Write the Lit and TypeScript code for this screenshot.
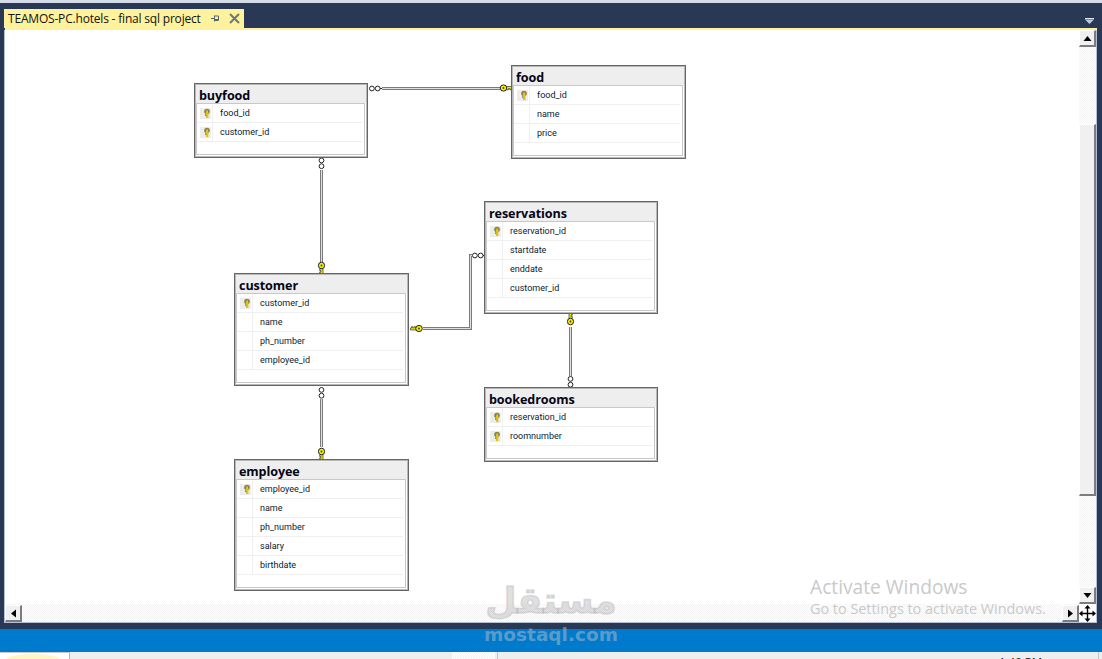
import { LitElement, html, css, svg } from "lit";
import { customElement } from "lit/decorators.js";

type T = { name: string; x: number; y: number; w: number; rows: [string, boolean][] };
const ORIGIN_X = 5, ORIGIN_Y = 30;
const tables: T[] = [
  { name: "buyfood", x: 194, y: 83, w: 174, rows: [["food_id", true], ["customer_id", true]] },
  { name: "food", x: 511, y: 65, w: 175, rows: [["food_id", true], ["name", false], ["price", false]] },
  { name: "reservations", x: 484, y: 201, w: 174, rows: [["reservation_id", true], ["startdate", false], ["enddate", false], ["customer_id", false]] },
  { name: "customer", x: 234, y: 273, w: 175, rows: [["customer_id", true], ["name", false], ["ph_number", false], ["employee_id", false]] },
  { name: "bookedrooms", x: 484, y: 387, w: 174, rows: [["reservation_id", true], ["roomnumber", true]] },
  { name: "employee", x: 234, y: 459, w: 175, rows: [["employee_id", true], ["name", false], ["ph_number", false], ["salary", false], ["birthdate", false]] },
];

const lines = [
  "M382 88.500H500",
  "M321.500 170V262",
  "M423 328.500H470.500V255.500H472",
  "M321.500 399V447",
  "M570.500 327V376",
];

const ring = (x: number, y: number) => svg`<circle cx=${x} cy=${y} r="2.400" fill="#fff" stroke="#222" stroke-width="1"/>`;
const infH = (x: number, y: number) => svg`${ring(x + 2.9, y)}${ring(x + 8.7, y)}<path d="M${x + 11} ${y}h2" stroke="#222"/>`;
const infV = (x: number, y: number) => svg`${ring(x, y + 2.9)}${ring(x, y + 8.7)}`;

/* Relationship key: head at (0,0) pointing along +x with two teeth. */
const key = (x: number, y: number, rot: number) => svg`<g transform="translate(${x} ${y}) rotate(${rot})">
  <path d="M3 -1.500H8.500V.5H7.500V1.800H6.300V.5H5V1.800H3.500V1.200H3Z" fill="#f6f000" stroke="#333" stroke-width=".7"/>
  <ellipse rx="3.300" ry="3.100" fill="#f6f000" stroke="#222" stroke-width="1"/>
  <circle r=".9" fill="#333"/>
</g>`;

@customElement("app-root")
export class AppRoot extends LitElement {
  static styles = css`
    :host { display: block; width: 1102px; height: 659px; position: relative; overflow: hidden; background: #293955; font-family: "Open Sans", "Liberation Sans", sans-serif; }
    .topstrip { height: 3px; background: #d6dbe9; }
    .tabs { height: 25px; display: flex; justify-content: space-between; padding-left: 4px; padding-right: 8px; }
    .tab { margin-top: 6px; width: 240px; height: 19px; box-sizing: border-box; background: #fff29d; display: flex; align-items: center; padding-left: 4px; color: #111; font-size: 12px; white-space: nowrap; font-family: "Open Sans", sans-serif; letter-spacing: -0.19px; }
    .tab .t { width: 203px; }
    .tab svg { display: block; }
    .tab .pin { margin-right: 9px; }
    .drop { margin-top: 15px; }
    .yline { height: 2px; background: #fff29d; margin: 0 5px 0 5px; }
    .doc { margin: 0 5px 0 4px; border-left: 1px solid #b4bfdc; border-right: 1px solid #b4bfdc; border-bottom: 1px solid #b4bfdc; display: grid; grid-template-columns: 1074px 17px; grid-template-rows: 574px 18px; background: #fff; width: 1091px; }
    .canvas { position: relative; overflow: hidden; background: #fff; }
    .wires { position: absolute; left: 0; top: 0; }
    .dither { background: repeating-conic-gradient(#f3f3f3 0 25%, #fff 0 50%) 0 0 / 2px 2px; }
    .vs { display: flex; flex-direction: column; }
    .hs { display: flex; padding-top: 1px; }
    .btn { box-sizing: border-box; width: 17px; height: 17px; background: #f0f0f0; border: 1px solid #fff; border-right: 2px solid #7c7c7c; border-bottom: 2px solid #7c7c7c; display: flex; align-items: center; justify-content: center; flex: none; }
    .hs .track { flex: 1; }
    .vs .track1 { height: 77px; }
    .vs .thumb { box-sizing: border-box; height: 374px; background: #f0f0f0; border: 1px solid #fff; border-right: 2px solid #7c7c7c; border-bottom: 2px solid #7c7c7c; }
    .vs .track2 { height: 91px; }
    .corner { background: #fff; display: flex; align-items: center; justify-content: center; }
    .navy { height: 6px; }
    .blue { height: 23px; background: #007acc; }
    .status { height: 7px; background: #eeeeee; display: flex; overflow: hidden; position: relative; }
    .thumbbox { width: 70px; background: #fff; border-right: 1px solid #b5b5b5; border-top: 1px solid #c8c8c8; box-sizing: border-box; overflow: hidden; }
    .blob { width: 60px; height: 20px; margin-left: 3px; margin-top: 1px; border-radius: 30px 30px 0 0 / 8px 8px 0 0; background: #fff6c8; }
    .sp { width: 382px; }
    .mid { width: 43px; }
    .vline { width: 1px; background: #c4c4c4; margin-left: 2px; }
    .clock { margin-left: 501px; font-size: 11.5px; line-height: 12px; padding-top: 4px; color: #222; white-space: nowrap; font-family: "Open Sans", sans-serif; width: 99px; }
    .vline2 { width: 1px; background: #c4c4c4; }

    .node { position: absolute; box-sizing: border-box; background: #fff; border: 1px solid #666; display: flex; flex-direction: column; box-shadow: inset 0 0 0 1px #b8b8b8; padding: 1px; }
    .title { height: 18px; background: #eeeeee; font-weight: 700; font-size: 12.6px; line-height: 21px; padding-left: 3px; color: #050515; flex: none; letter-spacing: -0.1px; }
    .box { flex: 1; border: 1px solid #c8c8c8; margin: 0 1px 1px 0; background: #fff; padding-right: 2px; position: relative; }
    .row { height: 19px; box-sizing: border-box; border-bottom: 1px solid #efefef; display: flex; align-items: center; font-size: 9px; font-family: Roboto, "Liberation Sans", sans-serif; color: #0a1a30; }
    .ic { width: 16px; height: 18px; box-sizing: border-box; border-right: 1px solid #efefef; display: flex; align-items: center; padding-left: 3px; flex: none; }
    .row span { margin-left: 7px; }

    .act { position: absolute; left: 810px; top: 574px; color: #c9c9c9; font-family: "Open Sans", sans-serif; pointer-events: none; }
    .act .a { font-size: 19.2px; line-height: 25px; }
    .act .b { font-size: 14.4px; line-height: 20px; }
    .wm { position: absolute; left: 484px; top: 578px; width: 134px; display: flex; flex-direction: column; align-items: center; pointer-events: none; }
    .wm .ar { font-family: "DejaVu Sans", "Noto Sans", sans-serif; font-weight: 700; font-size: 36px; line-height: 46px; color: rgba(185, 185, 185, 0.45); -webkit-text-stroke: 1.5px rgba(185, 185, 185, 0.45); height: 46px; white-space: nowrap; }
    .wm .en { font-family: "DejaVu Sans", sans-serif; font-weight: 700; font-size: 18.500px; line-height: 22px; color: rgba(170, 185, 200, 0.55); white-space: nowrap; }
  `;

  private rowKey() {
    return html`<svg width="11" height="11" viewBox="0 0 11 11">
      <rect width="11" height="11" fill="#ececec"/>
      <circle cx="7" cy="3.500" r="2.800" fill="#8f8344"/>
      <rect x="6" y="4" width="2.400" height="6" fill="#dcc31c"/>
      <rect x="5" y="6.500" width="1.200" height="1.200" fill="#6b5f20"/>
      <rect x="6.500" y="2.500" width="1.400" height="1.600" fill="#e9d640"/>
    </svg>`;
  }

  private node(t: T) {
    const h = 37 + t.rows.length * 19;
    return html`<div class="node" style="left:${t.x - ORIGIN_X}px;top:${t.y - ORIGIN_Y}px;width:${t.w}px;height:${h}px">
      <div class="title">${t.name}</div>
      <div class="box">
        ${t.rows.map(([n, k]) => html`<div class="row"><div class="ic">${k ? this.rowKey() : ""}</div><span>${n}</span></div>`)}
      </div>
    </div>`;
  }

  private tri(points: string) {
    return html`<svg width="9" height="9" viewBox="0 0 9 9"><polygon points=${points} fill="#000"/></svg>`;
  }

  render() {
    return html`
      <div class="topstrip"></div>
      <div class="tabs">
        <div class="tab">
          <span class="t">TEAMOS-PC.hotels - final sql project</span>
          <svg class="pin" width="9" height="9" viewBox="0 0 9 9"><path d="M0 4.500H3M3.500 1.500V7.500M3.500 2H7.500V6.500H3.500M3.500 5.500H7.500" fill="none" stroke="#5a6672" stroke-width="1"/></svg>
          <svg width="11" height="11" viewBox="0 0 11 11"><path d="M1 1L10 10M10 1L1 10" stroke="#6b7680" stroke-width="2"/></svg>
        </div>
        <svg class="drop" width="9" height="6" viewBox="0 0 9 6"><path d="M0 0H9V1.500H0Z" fill="#dfe6ee"/><path d="M.5 2H8.500L4.500 6Z" fill="#b9cbdc"/></svg>
      </div>
      <div class="yline"></div>
      <div class="doc">
        <div class="canvas">
          <svg class="wires" width="1074" height="574" viewBox="5 30 1074 574">
            ${lines.map((d) => svg`<path d=${d} fill="none" stroke="#7a7a7a" stroke-width="3"/><path d=${d} fill="none" stroke="#e0e0e0" stroke-width="1"/>`)}
            ${infH(369, 88.500)}
            ${infV(321.500, 157.500)}
            ${infV(321.500, 387)}
            ${infH(472, 255.500)}
            ${infV(570.500, 376)}
            ${key(503.500, 88, 0)}
            ${key(321.500, 265.500, 90)}
            ${key(321.500, 451.500, 90)}
            ${key(419, 328.500, 180)}
            ${key(570.500, 321.500, -90)}
          </svg>
          ${tables.map((t) => this.node(t))}
        </div>
        <div class="vs dither">
          <div class="btn">${this.tri("4.500,2 8.500,7 .5,7")}</div>
          <div class="track1"></div>
          <div class="thumb"></div>
          <div class="track2"></div>
          <div class="btn">${this.tri(".5,2 8.500,2 4.500,7")}</div>
        </div>
        <div class="hs dither">
          <div class="btn">${this.tri("2,4.500 7,.5 7,8.500")}</div>
          <div class="track"></div>
          <div class="btn">${this.tri("2,.5 7,4.500 2,8.500")}</div>
        </div>
        <div class="corner">
          <svg width="17" height="17" viewBox="0 0 17 17"><path d="M8.500 2V15M2 8.500H15" stroke="#000" stroke-width="1.400"/><path d="M8.500 0L11.500 3.500H5.500ZM8.500 17L11.500 13.500H5.500ZM0 8.500L3.500 5.500V11.500ZM17 8.500L13.500 5.500V11.500Z" fill="#000"/></svg>
        </div>
      </div>
      <div class="navy"></div>
      <div class="blue"></div>
      <div class="status">
        <div class="thumbbox"><div class="blob"></div></div>
        <div class="sp"></div>
        <div class="mid dither"></div>
        <div class="vline"></div>
        <div class="clock">1:40 PM</div>
        <div class="vline2"></div>
      </div>
      <div class="act"><div class="a">Activate Windows</div><div class="b">Go to Settings to activate Windows.</div></div>
      <div class="wm"><div class="ar" dir="rtl">مستقل</div><div class="en">mostaql.com</div></div>
    `;
  }
}
